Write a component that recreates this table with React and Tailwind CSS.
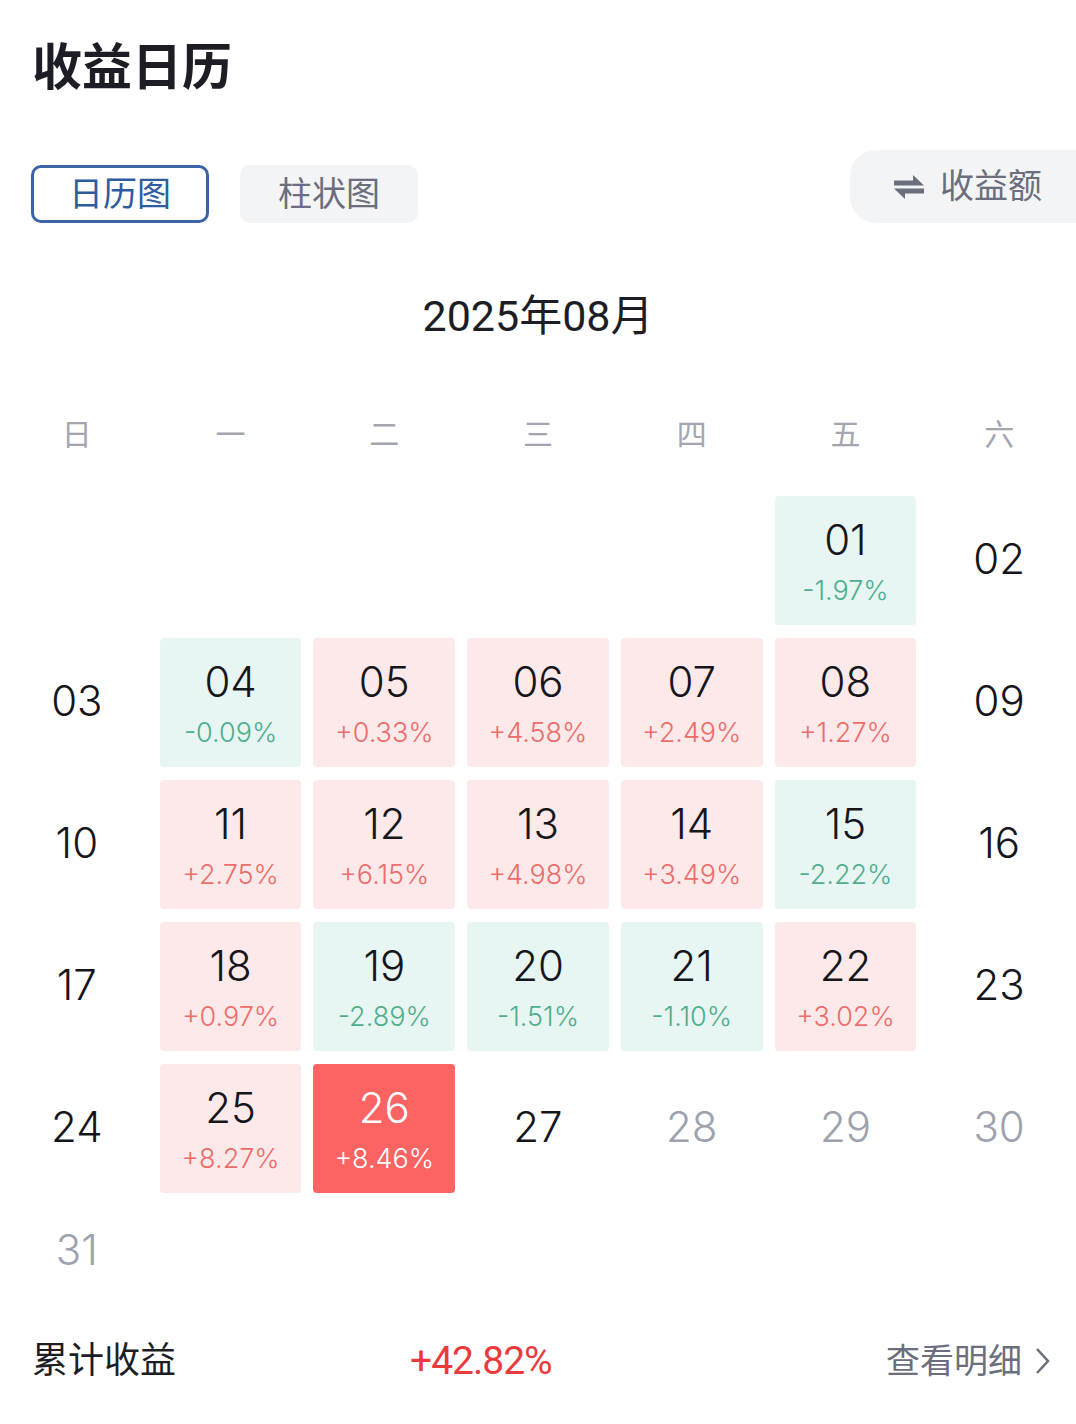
import React from 'react';

const CJK = '"Noto Sans CJK SC", sans-serif';

// kind: up / down / hot / plain / muted
const rows = [
  [null, null, null, null, null, { d: '01', p: '-1.97%', k: 'down' }, { d: '02', k: 'plain' }],
  [{ d: '03', k: 'plain' }, { d: '04', p: '-0.09%', k: 'down' }, { d: '05', p: '+0.33%', k: 'up' }, { d: '06', p: '+4.58%', k: 'up' }, { d: '07', p: '+2.49%', k: 'up' }, { d: '08', p: '+1.27%', k: 'up' }, { d: '09', k: 'plain' }],
  [{ d: '10', k: 'plain' }, { d: '11', p: '+2.75%', k: 'up' }, { d: '12', p: '+6.15%', k: 'up' }, { d: '13', p: '+4.98%', k: 'up' }, { d: '14', p: '+3.49%', k: 'up' }, { d: '15', p: '-2.22%', k: 'down' }, { d: '16', k: 'plain' }],
  [{ d: '17', k: 'plain' }, { d: '18', p: '+0.97%', k: 'up' }, { d: '19', p: '-2.89%', k: 'down' }, { d: '20', p: '-1.51%', k: 'down' }, { d: '21', p: '-1.10%', k: 'down' }, { d: '22', p: '+3.02%', k: 'up' }, { d: '23', k: 'plain' }],
  [{ d: '24', k: 'plain' }, { d: '25', p: '+8.27%', k: 'up' }, { d: '26', p: '+8.46%', k: 'hot' }, { d: '27', k: 'plain' }, { d: '28', k: 'muted' }, { d: '29', k: 'muted' }, { d: '30', k: 'muted' }],
];

const weekdays = ['日', '一', '二', '三', '四', '五', '六'];

const Cell = ({ c }) => {
  if (!c) return <div />;
  if (!c.p) {
    return (
      <div className={`flex items-center justify-center pb-[4px] text-[42px] ${c.k === 'muted' ? 'text-[#9ea1ae]' : 'text-[#15151c]'}`}>
        {c.d}
      </div>
    );
  }
  const box = c.k === 'up' ? 'bg-[#fde9e9]' : c.k === 'down' ? 'bg-[#e7f6f3]' : 'bg-[#fb6463]';
  const num = c.k === 'hot' ? 'text-white' : 'text-[#15151c]';
  const pct = c.k === 'up' ? 'text-[#ec6d6b]' : c.k === 'down' ? 'text-[#4fae8d]' : 'text-white';
  return (
    <div className={`mx-[6px] flex flex-col items-center rounded-[4px] ${box}`}>
      <div className={`mt-[19px] text-[42px] leading-[50px] ${num}`}>{c.d}</div>
      <div className={`mt-[10px] text-[27px] leading-[32px] ${pct}`}>{c.p}</div>
    </div>
  );
};

export default function App() {
  return (
    <div className="w-[1076px] min-h-[1424px] bg-white overflow-hidden" style={{ fontFamily: `Roboto, ${CJK}` }}>
      <h1 className="pl-[32px] pt-[40px] text-[50px] font-bold leading-[56px] text-[#1d1e25]">收益日历</h1>

      <div className="mt-[54px] flex items-end justify-between">
        <div className="flex gap-[31px] pl-[31px]">
          <div className="flex h-[58px] w-[178px] items-center justify-center rounded-[10px] border-[3px] border-[#3a64a6] text-[34px] text-[#2f5c9e]">
            日历图
          </div>
          <div className="flex h-[58px] w-[178px] items-center justify-center rounded-[10px] bg-[#f3f4f6] text-[34px] text-[#6b6e7c]">
            柱状图
          </div>
        </div>
        <div className="flex h-[73px] w-[226px] items-center gap-[14px] rounded-l-[26px] bg-[#f3f4f6] pl-[42px] text-[34px] text-[#6b6e7c]">
          <svg width="34" height="28" viewBox="0 0 34 28" fill="#6b6e7c">
            <path d="M2 7.5h19V2l11 10.5H2z" />
            <path d="M32 20.5H13V26L2 15.5h30z" />
          </svg>
          <span>收益额</span>
        </div>
      </div>

      <div className="mt-[69px] text-center text-[43px] leading-[48px] text-[#1d1e25]">2025年08月</div>

      <div className="mt-[78px] grid grid-cols-7 text-center text-[30px] leading-[34px] text-[#a3a6b1]">
        {weekdays.map((w) => (
          <div key={w}>{w}</div>
        ))}
      </div>

      <div className="mt-[44px] grid grid-cols-7 auto-rows-[129px] gap-y-[13px] font-light" style={{ fontFamily: `Inter, ${CJK}` }}>
        {rows.flat().map((c, i) => (
          <Cell key={i} c={c} />
        ))}
      </div>

      <div className="grid h-[112px] grid-cols-7 items-center font-light" style={{ fontFamily: `Inter, ${CJK}` }}>
        <div className="text-center text-[42px] text-[#9ea1ae]">31</div>
      </div>

      <div className="flex items-center pl-[32px] pr-[26px] pt-[27px]">
        <div className="w-[378px] text-[36px] text-[#1d1e25]">累计收益</div>
        <div className="text-[39px] tracking-[-1px] text-[#ea3a3c]">+42.82%</div>
        <div className="ml-auto flex items-center gap-[12px] text-[34px] text-[#6b6e7c]">
          <span>查看明细</span>
          <svg width="16" height="28" viewBox="0 0 16 28" fill="none" stroke="#6b6e7c" strokeWidth="2.5">
            <path d="M3 2l11 12L3 26" />
          </svg>
        </div>
      </div>
    </div>
  );
}
